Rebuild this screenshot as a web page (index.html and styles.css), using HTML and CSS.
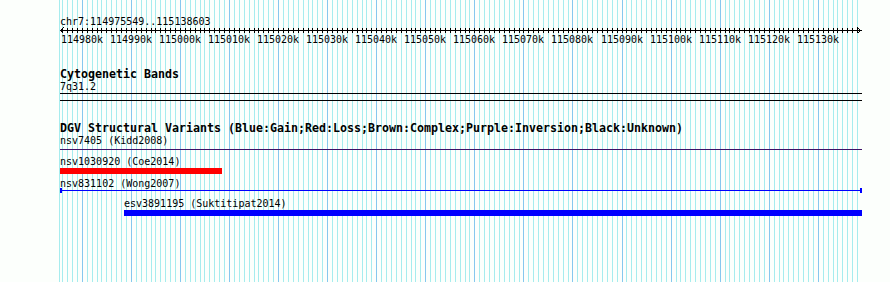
FILE: index.html
```html
<!DOCTYPE html>
<html lang="en">

<head>
    <meta charset="UTF-8">
    <title>chr7:114975549..115138603</title>
    <link rel="stylesheet" href="styles.css">
</head>

<body>
    <svg class="grid" id="grid" width="890" height="282"></svg>

    <div class="panel">
        <div class="track ruler">
            <div class="label">chr7:114975549..115138603</div>
            <svg class="axis" id="axis" width="802" height="7"></svg>
            <div class="scale" id="scale"></div>
        </div>

        <div class="track cyto">
            <div class="track-title">Cytogenetic Bands</div>
            <div class="label">7q31.2</div>
            <div class="band"></div>
        </div>

        <div class="track dgv">
            <div class="track-title">DGV Structural Variants (Blue:Gain;Red:Loss;Brown:Complex;Purple:Inversion;Black:Unknown)</div>

            <div class="label">nsv7405 (Kidd2008)</div>
            <div class="hairline inversion"></div>

            <div class="label gap">nsv1030920 (Coe2014)</div>
            <div class="bar loss" style="width: 162px;"></div>

            <div class="label gap-sm">nsv831102 (Wong2007)</div>
            <div class="capped"></div>

            <div class="label gap-md" style="margin-left: 64px;">esv3891195 (Suktitipat2014)</div>
            <div class="bar gain" style="margin-left: 64px; width: 738px;"></div>
        </div>
    </div>

    <script>
        var START = 114975549, END = 115138603;
        var LEFT = 60, WIDTH = 800;
        var NS = "http://www.w3.org/2000/svg";

        function px(pos) {
            return Math.round(LEFT + (pos - START) * WIDTH / (END - START));
        }

        function rect(svg, x, y, w, h, cls) {
            var r = document.createElementNS(NS, "rect");
            r.setAttribute("x", x);
            r.setAttribute("y", y);
            r.setAttribute("width", w);
            r.setAttribute("height", h);
            r.setAttribute("class", cls);
            svg.appendChild(r);
        }

        // background grid, one line per kb, darker every 10 kb
        var grid = document.getElementById("grid");
        rect(grid, 59, 0, 1, 282, "minor");
        for (var k = Math.ceil(START / 1000); k * 1000 <= END; k++) {
            rect(grid, px(k * 1000), 0, 1, 282, k % 10 === 0 ? "major" : "minor");
        }

        // ruler line with ticks and arrows
        var axis = document.getElementById("axis");
        rect(axis, 0, 4, 802, 1, "ink");
        for (var t = Math.ceil(START / 1000); t * 1000 <= END; t++) {
            rect(axis, px(t * 1000) - LEFT, 2, 1, 5, "ink");
        }
        var arrows = document.createElementNS(NS, "path");
        arrows.setAttribute("d", "M3.5 1.5 L0.5 4.5 L3.5 7.5 M797.5 1.5 L800.5 4.5 L797.5 7.5");
        arrows.setAttribute("class", "arrow");
        axis.appendChild(arrows);

        // scale labels every 10 kb
        var scale = document.getElementById("scale");
        for (var m = Math.ceil(START / 10000); m * 10000 <= END; m++) {
            var span = document.createElement("span");
            span.textContent = (m * 10) + "k";
            span.style.left = (px(m * 10000) - LEFT) + "px";
            scale.appendChild(span);
        }
    </script>
</body>

</html>
```

FILE: styles.css
```css
body {
    margin: 0;
    height: 282px;
    overflow: hidden;
    position: relative;
    background-color: #fcfffc;
    font-family: "DejaVu Sans Mono", monospace;
    font-size: 10px;
    line-height: 13px;
    color: #000;
}

.grid {
    position: absolute;
    top: 0;
    left: 0;
    shape-rendering: crispEdges;
}

.grid .minor {
    fill: #a6ecee;
}

.grid .major {
    fill: #86c8ee;
}

.panel {
    position: relative;
    margin-left: 60px;
    width: 802px;
    padding-top: 15px;
}

.label {
    height: 13px;
    white-space: nowrap;
}

.axis {
    display: block;
    margin-top: -2px;
    shape-rendering: crispEdges;
}

.axis .ink {
    fill: #000;
}

.axis .arrow {
    fill: none;
    stroke: #000;
    stroke-width: 1;
}

.scale {
    position: relative;
    height: 13px;
}

.scale span {
    position: absolute;
    top: 0;
    transform: translateX(-50%);
    white-space: nowrap;
}

.track-title {
    height: 12px;
    line-height: 12px;
    font-size: 11.63px;
    font-weight: bold;
    white-space: nowrap;
}

.cyto {
    margin-top: 22px;
}

.band {
    height: 6px;
    border-top: 1px solid #000;
    border-bottom: 1px solid #000;
}

.dgv {
    margin-top: 21px;
}

.hairline {
    margin-top: 2px;
    height: 1px;
}

.inversion {
    background-color: #3e1268;
}

.gap {
    margin-top: 5px;
}

.gap-sm {
    margin-top: 3px;
}

.gap-md {
    margin-top: 4px;
}

.bar {
    height: 6px;
}

.loss {
    background-color: #ff0000;
}

.gain {
    background-color: #0000ff;
}

.capped {
    margin-top: -2px;
    height: 5px;
    padding-top: 2px;
    border-left: 2px solid #0000ff;
    border-right: 2px solid #0000ff;
    box-sizing: border-box;
}

.capped::before {
    content: "";
    display: block;
    height: 1px;
    background-color: #0000ff;
}
```
